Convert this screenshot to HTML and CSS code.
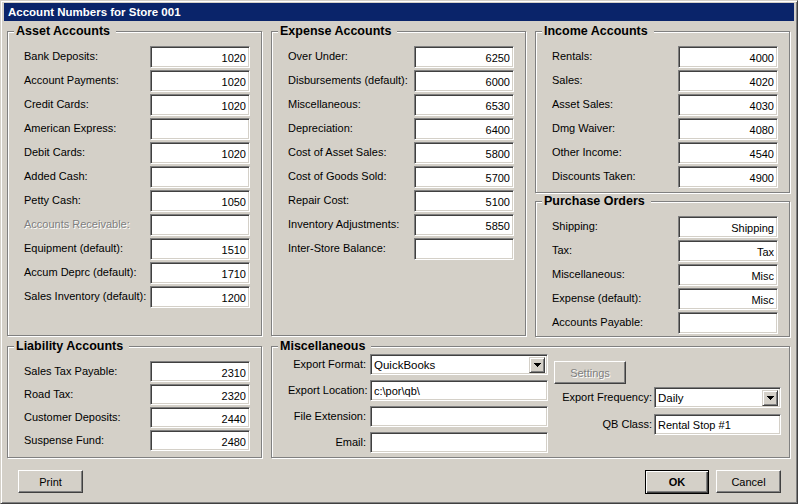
FILE: index.html
```html
<!DOCTYPE html>
<html lang="en">
<head>
  <meta charset="UTF-8">
  <title>Account Numbers for Store 001</title>
  <link rel="stylesheet" href="styles.css">
</head>
<body>
  <div class="window">
    <div class="titlebar">Account Numbers for Store 001</div>

    <div class="content">
      <fieldset class="group">
        <legend>Asset Accounts</legend>
        <div class="row"><label>Bank Deposits:</label><input class="field" value="1020"></div>
        <div class="row"><label>Account Payments:</label><input class="field" value="1020"></div>
        <div class="row"><label>Credit Cards:</label><input class="field" value="1020"></div>
        <div class="row"><label>American Express:</label><input class="field" value=""></div>
        <div class="row"><label>Debit Cards:</label><input class="field" value="1020"></div>
        <div class="row"><label>Added Cash:</label><input class="field" value=""></div>
        <div class="row"><label>Petty Cash:</label><input class="field" value="1050"></div>
        <div class="row"><label class="disabled">Accounts Receivable:</label><input class="field" value=""></div>
        <div class="row"><label>Equipment (default):</label><input class="field" value="1510"></div>
        <div class="row"><label>Accum Deprc (default):</label><input class="field" value="1710"></div>
        <div class="row"><label>Sales Inventory (default):</label><input class="field" value="1200"></div>
      </fieldset>

      <fieldset class="group">
        <legend>Expense Accounts</legend>
        <div class="row"><label>Over Under:</label><input class="field" value="6250"></div>
        <div class="row"><label>Disbursements (default):</label><input class="field" value="6000"></div>
        <div class="row"><label>Miscellaneous:</label><input class="field" value="6530"></div>
        <div class="row"><label>Depreciation:</label><input class="field" value="6400"></div>
        <div class="row"><label>Cost of Asset Sales:</label><input class="field" value="5800"></div>
        <div class="row"><label>Cost of Goods Sold:</label><input class="field" value="5700"></div>
        <div class="row"><label>Repair Cost:</label><input class="field" value="5100"></div>
        <div class="row"><label>Inventory Adjustments:</label><input class="field" value="5850"></div>
        <div class="row"><label>Inter-Store Balance:</label><input class="field" value=""></div>
      </fieldset>

      <div class="stack">
        <fieldset class="group income">
          <legend>Income Accounts</legend>
          <div class="row"><label>Rentals:</label><input class="field" value="4000"></div>
          <div class="row"><label>Sales:</label><input class="field" value="4020"></div>
          <div class="row"><label>Asset Sales:</label><input class="field" value="4030"></div>
          <div class="row"><label>Dmg Waiver:</label><input class="field" value="4080"></div>
          <div class="row"><label>Other Income:</label><input class="field" value="4540"></div>
          <div class="row"><label>Discounts Taken:</label><input class="field" value="4900"></div>
        </fieldset>
        <fieldset class="group orders">
          <legend>Purchase Orders</legend>
          <div class="row"><label>Shipping:</label><input class="field" value="Shipping"></div>
          <div class="row"><label>Tax:</label><input class="field" value="Tax"></div>
          <div class="row"><label>Miscellaneous:</label><input class="field" value="Misc"></div>
          <div class="row"><label>Expense (default):</label><input class="field" value="Misc"></div>
          <div class="row"><label>Accounts Payable:</label><input class="field" value=""></div>
        </fieldset>
      </div>

      <fieldset class="group liability">
        <legend>Liability Accounts</legend>
        <div class="row"><label>Sales Tax Payable:</label><input class="field" value="2310"></div>
        <div class="row"><label>Road Tax:</label><input class="field" value="2320"></div>
        <div class="row"><label>Customer Deposits:</label><input class="field" value="2440"></div>
        <div class="row"><label>Suspense Fund:</label><input class="field" value="2480"></div>
      </fieldset>

      <fieldset class="group misc">
        <legend>Miscellaneous</legend>
        <div class="misc-body">
          <div class="misc-form">
            <label>Export Format:</label>
            <div class="combo"><span>QuickBooks</span><span class="combo-btn"><svg width="7" height="4" viewBox="0 0 7 4" shape-rendering="crispEdges"><path d="M0 0h7v1H0zM1 1h5v1H1zM2 2h3v1H2zM3 3h1v1H3z" fill="#000"/></svg></span></div>
            <label>Export Location:</label>
            <input class="field left" value="c:\por\qb\">
            <label>File Extension:</label>
            <input class="field left" value="">
            <label>Email:</label>
            <input class="field left" value="">
          </div>
          <div class="misc-side">
            <button class="btn settings" disabled>Settings</button>
            <div class="side-row">
              <label>Export Frequency:</label>
              <div class="combo"><span>Daily</span><span class="combo-btn"><svg width="7" height="4" viewBox="0 0 7 4" shape-rendering="crispEdges"><path d="M0 0h7v1H0zM1 1h5v1H1zM2 2h3v1H2zM3 3h1v1H3z" fill="#000"/></svg></span></div>
            </div>
            <div class="side-row">
              <label>QB Class:</label>
              <input class="field left" value="Rental Stop #1">
            </div>
          </div>
        </div>
      </fieldset>
    </div>

    <div class="footer">
      <button class="btn">Print</button>
      <button class="btn default">OK</button>
      <button class="btn">Cancel</button>
    </div>
  </div>
</body>
</html>
```

FILE: styles.css
```css
* {
  box-sizing: border-box;
}
body {
  margin: 0;
  background: #d4d0c8;
  font-family: "Liberation Sans", Arial, sans-serif;
  font-size: 11px;
  color: #000;
}
.window {
  width: 798px;
  height: 504px;
  border: 1px solid;
  border-color: #d4d0c8 #404040 #404040 #d4d0c8;
  box-shadow: inset 1px 1px #fff, inset -1px -1px #808080;
  padding: 2px 3px 3px 3px;
}
.titlebar {
  height: 18px;
  line-height: 18px;
  background: #0a246a;
  color: #fff;
  font-weight: bold;
  font-size: 11.5px;
  padding-left: 4px;
}
.content {
  display: grid;
  grid-template-columns: repeat(3, 255px);
  grid-template-rows: 312px 119px;
  column-gap: 9px;
  row-gap: 3px;
  padding: 3px 4px 0 3px;
}
.group {
  margin: 0;
  min-width: 0;
  border: 1px solid #808080;
  box-shadow: inset 1px 1px #fff, 1px 1px #fff;
  padding: 7px 8px 0 16px;
}
.group legend {
  font-size: 12.5px;
  font-weight: bold;
  line-height: 15px;
  padding: 0 6px 0 2px;
  margin-left: -10px;
  background: #d4d0c8;
}
.stack {
  display: flex;
  flex-direction: column;
  gap: 1px;
}
.income {
  padding-bottom: 2px;
}
.orders {
  flex: 1;
}
.misc {
  grid-column: 2 / 4;
  padding: 0 7px 0 16px;
}
.row {
  display: grid;
  grid-template-columns: 126px 100px;
  align-items: center;
  height: 22px;
  margin-bottom: 2px;
}
.row label,
.misc label {
  white-space: nowrap;
  margin-top: -2px;
}
label.disabled {
  color: #808080;
  text-shadow: 1px 1px #fff;
}
.field {
  width: 100%;
  height: 22px;
  margin: 0;
  border: 1px solid;
  border-color: #808080 #fff #fff #808080;
  box-shadow: inset 1px 1px #404040, inset -1px -1px #d4d0c8;
  background: #fff;
  font: inherit;
  color: #000;
  padding: 2px 3px 0;
  text-align: right;
  outline: none;
}
.field.left {
  text-align: left;
  height: 21px;
  padding: 1px 3px 0;
}
.liability .row {
  height: 21px;
}
.liability .field {
  height: 21px;
}
.misc-body {
  display: flex;
  gap: 6px;
}
.misc-form {
  display: grid;
  grid-template-columns: 78px 178px;
  grid-auto-rows: 21px;
  column-gap: 4px;
  row-gap: 5px;
  align-items: center;
}
.misc-form label,
.side-row label {
  text-align: right;
}
.misc-side {
  display: flex;
  flex-direction: column;
  padding-top: 7px;
}
.side-row {
  display: grid;
  grid-template-columns: 98px 127px;
  column-gap: 2px;
  height: 21px;
  align-items: center;
  margin-bottom: 6px;
}
.combo {
  display: flex;
  align-items: center;
  height: 21px;
  background: #fff;
  border: 1px solid;
  border-color: #808080 #fff #fff #808080;
  box-shadow: inset 1px 1px #404040, inset -1px -1px #d4d0c8;
  padding: 2px 2px 1px 3px;
  font-size: 11.5px;
}
.combo span:first-child {
  flex: 1;
}
.combo-btn {
  display: flex;
  align-items: center;
  justify-content: center;
  width: 16px;
  height: 16px;
  background: #d4d0c8;
  border: 1px solid;
  border-color: #d4d0c8 #404040 #404040 #d4d0c8;
  box-shadow: inset 1px 1px #fff, inset -1px -1px #808080;
}
.btn {
  width: 65px;
  height: 23px;
  padding: 0;
  background: #d4d0c8;
  border: 1px solid;
  border-color: #fff #404040 #404040 #fff;
  box-shadow: inset -1px -1px #808080, inset 1px 1px #d4d0c8;
  font: inherit;
  color: #000;
}
.btn.default {
  height: 24px;
  width: 64px;
  margin-left: auto;
  margin-right: 7px;
  border-color: #000;
  box-shadow: inset 1px 1px #fff, inset -1px -1px #404040, inset -2px -2px #808080;
  font-weight: bold;
}
.btn.settings {
  width: 72px;
  height: 23px;
  margin-bottom: 3px;
  color: #808080;
  text-shadow: 1px 1px #fff;
}
.footer {
  display: flex;
  align-items: flex-start;
  padding: 12px 13px 0 14px;
}
```
